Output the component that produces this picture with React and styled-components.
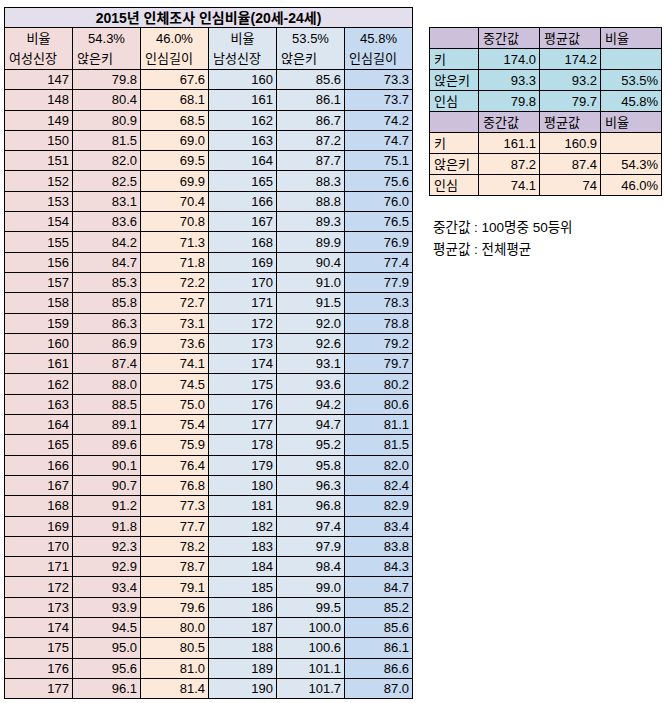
import React from 'react'
import styled, { createGlobalStyle } from 'styled-components'

const GlobalStyle = createGlobalStyle`
  html, body {
    margin: 0;
    padding: 0;
    background: #ffffff;
  }
  body {
    font-family: "Liberation Sans", "Noto Sans CJK KR", sans-serif;
    font-size: 13px;
    color: #000;
  }
`

const colors = {
  title: '#E4DFEC',
  pink: '#F2DCDB',
  peach: '#FDE9D9',
  sky: '#DCE6F1',
  blue: '#C5D9F1',
  purple: '#CCC0DA',
  teal: '#B7DEE8',
}

const Page = styled.div`
  display: flex;
  align-items: flex-start;
  gap: 16px;
  padding: 7px 0 0 4px;
`

const Sheet = styled.table`
  border-collapse: collapse;
  table-layout: fixed;
  width: 409px;
`

const Row = styled.tr`
  height: ${p => p.$h || 20}px;
`

const Cell = styled.td`
  box-sizing: border-box;
  padding: 0 3px 0 ${p => (p.$align === 'left' ? 4 : 3)}px;
  border-left: 1px solid #000;
  border-right: 1px solid #000;
  border-top: 1px solid #000;
  border-bottom: 1px solid #000;
  background: ${p => p.$bg || '#fff'};
  text-align: ${p => p.$align || 'right'};
  font-weight: ${p => (p.$bold ? 700 : 400)};
  font-size: ${p => (p.$bold ? 14 : 13)}px;
  line-height: 1;
  white-space: nowrap;
  overflow: hidden;
  vertical-align: middle;
`

const Side = styled.div`
  display: flex;
  flex-direction: column;
  padding-top: 20px;
`

const Summary = styled.table`
  border-collapse: collapse;
  table-layout: fixed;
  width: 233px;
`

const Notes = styled.div`
  margin-top: 24px;
  margin-left: 4px;
  display: flex;
  flex-direction: column;
  gap: 7px;
  line-height: 15px;
  font-size: 13.5px;
`

const female = [
  [147, '79.8', '67.6'], [148, '80.4', '68.1'], [149, '80.9', '68.5'], [150, '81.5', '69.0'],
  [151, '82.0', '69.5'], [152, '82.5', '69.9'], [153, '83.1', '70.4'], [154, '83.6', '70.8'],
  [155, '84.2', '71.3'], [156, '84.7', '71.8'], [157, '85.3', '72.2'], [158, '85.8', '72.7'],
  [159, '86.3', '73.1'], [160, '86.9', '73.6'], [161, '87.4', '74.1'], [162, '88.0', '74.5'],
  [163, '88.5', '75.0'], [164, '89.1', '75.4'], [165, '89.6', '75.9'], [166, '90.1', '76.4'],
  [167, '90.7', '76.8'], [168, '91.2', '77.3'], [169, '91.8', '77.7'], [170, '92.3', '78.2'],
  [171, '92.9', '78.7'], [172, '93.4', '79.1'], [173, '93.9', '79.6'], [174, '94.5', '80.0'],
  [175, '95.0', '80.5'], [176, '95.6', '81.0'], [177, '96.1', '81.4'],
]

const male = [
  [160, '85.6', '73.3'], [161, '86.1', '73.7'], [162, '86.7', '74.2'], [163, '87.2', '74.7'],
  [164, '87.7', '75.1'], [165, '88.3', '75.6'], [166, '88.8', '76.0'], [167, '89.3', '76.5'],
  [168, '89.9', '76.9'], [169, '90.4', '77.4'], [170, '91.0', '77.9'], [171, '91.5', '78.3'],
  [172, '92.0', '78.8'], [173, '92.6', '79.2'], [174, '93.1', '79.7'], [175, '93.6', '80.2'],
  [176, '94.2', '80.6'], [177, '94.7', '81.1'], [178, '95.2', '81.5'], [179, '95.8', '82.0'],
  [180, '96.3', '82.4'], [181, '96.8', '82.9'], [182, '97.4', '83.4'], [183, '97.9', '83.8'],
  [184, '98.4', '84.3'], [185, '99.0', '84.7'], [186, '99.5', '85.2'], [187, '100.0', '85.6'],
  [188, '100.6', '86.1'], [189, '101.1', '86.6'], [190, '101.7', '87.0'],
]

const summary = [
  { bg: colors.teal, rows: [['키', '174.0', '174.2', ''], ['앉은키', '93.3', '93.2', '53.5%'], ['인심', '79.8', '79.7', '45.8%']] },
  { bg: colors.peach, rows: [['키', '161.1', '160.9', ''], ['앉은키', '87.2', '87.4', '54.3%'], ['인심', '74.1', '74', '46.0%']] },
]

const SummaryHead = () => (
  <Row $h={21}>
    <Cell $bg={colors.purple} $align="left"></Cell>
    <Cell $bg={colors.purple} $align="left">중간값</Cell>
    <Cell $bg={colors.purple} $align="left">평균값</Cell>
    <Cell $bg={colors.purple} $align="left">비율</Cell>
  </Row>
)

export default function App() {
  const colBg = [colors.pink, colors.pink, colors.peach, colors.sky, colors.sky, colors.blue]

  return (
    <>
      <GlobalStyle />
      <Page>
        <Sheet>
          <colgroup>
            {colBg.map((_, i) => <col key={i} style={{ width: 68 }} />)}
          </colgroup>
          <tbody>
            <Row $h={20}>
              <Cell colSpan={6} $bg={colors.title} $align="center" $bold>
                2015년 인체조사 인심비율(20세-24세)
              </Cell>
            </Row>
            <Row $h={21}>
              {['비율', '54.3%', '46.0%', '비율', '53.5%', '45.8%'].map((t, i) => (
                <Cell key={i} $bg={colBg[i]} $align="center" style={{ borderBottom: 'none' }}>{t}</Cell>
              ))}
            </Row>
            <Row $h={21}>
              {['여성신장', '앉은키', '인심길이', '남성신장', '앉은키', '인심길이'].map((t, i) => (
                <Cell key={i} $bg={colBg[i]} $align="left" style={{ borderTop: 'none' }}>{t}</Cell>
              ))}
            </Row>
            {female.map((f, r) => {
              const m = male[r]
              const vals = [f[0], f[1], f[2], m[0], m[1], m[2]]
              return (
                <Row key={r} $h={20.3}>
                  {vals.map((v, i) => <Cell key={i} $bg={colBg[i]}>{v}</Cell>)}
                </Row>
              )
            })}
          </tbody>
        </Sheet>

        <Side>
          <Summary>
            <colgroup>
              <col style={{ width: 49 }} />
              <col style={{ width: 61 }} />
              <col style={{ width: 61 }} />
              <col style={{ width: 61 }} />
            </colgroup>
            <tbody>
              {summary.map((block, b) => (
                <React.Fragment key={b}>
                  <SummaryHead />
                  {block.rows.map((row, r) => (
                    <Row key={r} $h={21}>
                      {row.map((v, i) => (
                        <Cell key={i} $bg={block.bg} $align={i === 0 ? 'left' : 'right'}>{v}</Cell>
                      ))}
                    </Row>
                  ))}
                </React.Fragment>
              ))}
            </tbody>
          </Summary>
          <Notes>
            <span>중간값 : 100명중 50등위</span>
            <span>평균값 : 전체평균</span>
          </Notes>
        </Side>
      </Page>
    </>
  )
}
